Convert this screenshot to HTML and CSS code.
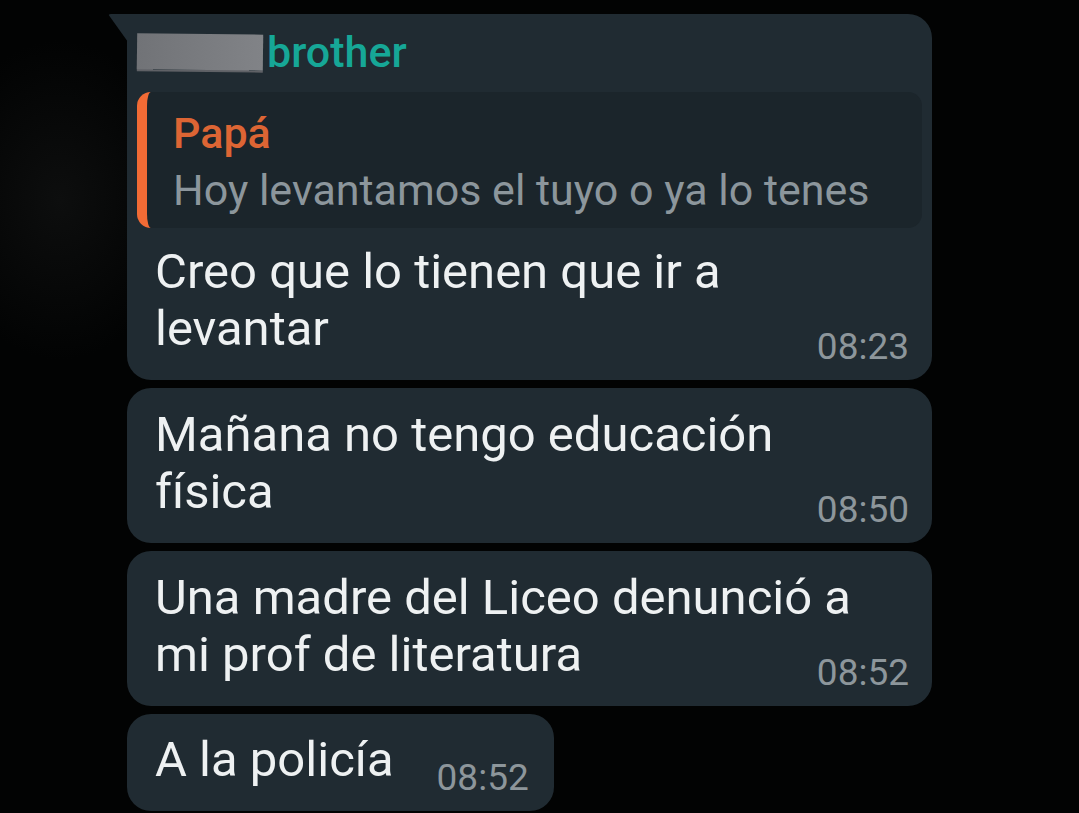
FILE: index.html
```html
<!DOCTYPE html>
<html lang="es">
<head>
  <meta charset="UTF-8">
  <title>Chat</title>
  <link rel="stylesheet" href="styles.css">
</head>
<body>

<div class="chat">
  <div class="bubble first">
    <div class="sender">
      <span class="redacted"></span>
      <span class="sender-name">brother</span>
    </div>
    <div class="quote">
      <div class="quote-name">Papá</div>
      <div class="quote-text">Hoy levantamos el tuyo o ya lo tenes</div>
    </div>
    <div class="text">Creo que lo tienen que ir a levantar<span class="time">08:23</span></div>
  </div>

  <div class="bubble">
    <div class="text">Mañana no tengo educación física<span class="time">08:50</span></div>
  </div>

  <div class="bubble">
    <div class="text">Una madre del Liceo denunció a mi prof de literatura<span class="time">08:52</span></div>
  </div>

  <div class="bubble short">
    <div class="text">A la policía<span class="time">08:52</span></div>
  </div>
</div>

</body>
</html>
```

FILE: styles.css
```css
body {
  margin: 0;
  background: #020303;
  font-family: Roboto, "Liberation Sans", sans-serif;
  height: 813px;
  overflow: hidden;
}
.chat {
  display: flex;
  flex-direction: column;
  align-items: flex-start;
  gap: 8px;
  padding: 14px 0 0 127px;
  min-height: 100%;
  box-sizing: border-box;
  background: radial-gradient(ellipse 120px 160px at 60px 200px, #0d0e0e, transparent);
}
.bubble {
  position: relative;
  width: 805px;
  box-sizing: border-box;
  background: #202b32;
  border-radius: 24px;
  padding: 18px 23px 13px 28px;
  color: #eef1f2;
}
.bubble.first {
  border-top-left-radius: 0;
  padding-top: 14px;
  padding-bottom: 13px;
}
.bubble.first::before {
  content: "";
  position: absolute;
  top: 0;
  left: -19px;
  width: 20px;
  height: 28px;
  background: #202b32;
  clip-path: polygon(0 0, 100% 0, 100% 100%);
  border-top-left-radius: 3px;
}
.sender {
  display: flex;
  align-items: center;
  gap: 4px;
  margin-left: -18px;
}
.redacted {
  display: inline-block;
  width: 126px;
  height: 36px;
  background: linear-gradient(to right, #717377, #818387);
  box-shadow: 0 2px 0 #5f6166;
  transform: rotate(0.6deg);
}
.sender-name {
  color: #16a797;
  font-size: 43px;
  font-weight: 500;
  line-height: 48px;
}
.quote {
  margin: 16px -13px 15px -18px;
  padding: 13px 20px 9px 26px;
  background: #1b252b;
  border-left: 10px solid #f26b35;
  border-radius: 14px;
}
.quote-name {
  color: #dd6534;
  font-size: 43px;
  font-weight: 500;
  line-height: 57px;
}
.quote-text {
  color: #8c969c;
  font-size: 43px;
  line-height: 57px;
  white-space: nowrap;
}
.text {
  display: flow-root;
  font-size: 49px;
  line-height: 57px;
  max-width: 715px;
}
.time {
  float: right;
  color: #8d969b;
  font-size: 37px;
  line-height: 40px;
  margin: 27px -39px 0 43px;
}
.bubble.short {
  width: auto;
  padding-top: 17px;
  padding-right: 25px;
}
.bubble.short .time {
  margin-right: 0;
}
```
